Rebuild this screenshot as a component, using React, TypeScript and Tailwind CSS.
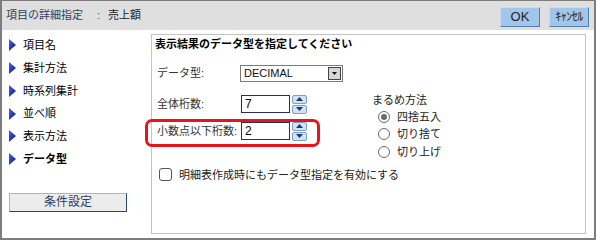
import React from "react";

const font = { fontFamily: '"Liberation Sans", "Noto Sans CJK JP", sans-serif' };

const navItems = ["項目名", "集計方法", "時系列集計", "並べ順", "表示方法", "データ型"];

function Arrow() {
  return (
    <svg width="7" height="12" viewBox="0 0 7 12" className="shrink-0">
      <defs>
        <linearGradient id="ag" x1="0" y1="0" x2="1" y2="1">
          <stop offset="0" stopColor="#4a63f0" />
          <stop offset="1" stopColor="#0b1470" />
        </linearGradient>
      </defs>
      <polygon points="0,0 7,6 0,12" fill="url(#ag)" />
    </svg>
  );
}

function Spin() {
  return (
    <div className="ml-[2px] flex w-[15px] flex-col gap-[1px]">
      <div className="flex h-[9px] items-center justify-center rounded-[2px] border border-[#7d9fc8] bg-[#d2e2f4]">
        <svg width="7" height="4" viewBox="0 0 7 4">
          <polygon points="0,4 3.5,0 7,4" fill="#173e6e" />
        </svg>
      </div>
      <div className="flex h-[9px] items-center justify-center rounded-[2px] border border-[#7d9fc8] bg-[#d2e2f4]">
        <svg width="7" height="4" viewBox="0 0 7 4">
          <polygon points="0,0 7,0 3.5,4" fill="#173e6e" />
        </svg>
      </div>
    </div>
  );
}

function NumberRow({ label, value }: { label: string; value: string }) {
  return (
    <div className="flex h-[18px] items-center">
      <span className="w-[84px] text-[11px] leading-[18px] text-[#333]">{label}</span>
      <div className="flex h-[18px] w-[49px] items-center border border-[#2b2b63] bg-white pl-[3px] text-[12px] text-black">
        {value}
      </div>
      <Spin />
    </div>
  );
}

function Radio({ label, checked }: { label: string; checked?: boolean }) {
  return (
    <div className="flex h-[17.5px] items-center pl-[6px]">
      <span className="flex h-[12px] w-[12px] items-center justify-center rounded-full border border-[#6b6b6b] bg-white">
        {checked && <span className="h-[6px] w-[6px] rounded-full bg-[#6a6a6a]" />}
      </span>
      <span className="ml-[7px] text-[11px] text-[#222]">{label}</span>
    </div>
  );
}

export default function App() {
  return (
    <div className="h-[240px] w-[596px] bg-white" style={font}>
      <div className="flex h-[240px] w-[596px] flex-col border-2 border-t border-[#7d7d7d] bg-white">
        <div className="flex h-[29px] items-center justify-between bg-[#dfdfdf] pl-[4px] pr-[5px]">
          <div className="flex items-center text-[11px]">
            <span className="text-[#2e3f66]">項目の詳細指定</span>
            <span className="ml-[14px] text-[#555]">:</span>
            <span className="ml-[8px] text-[#222]">売上額</span>
          </div>
          <div className="flex items-center gap-[9px] pt-[2px]">
            <button
              type="button"
              className="flex h-[20px] w-[40px] items-center justify-center border border-b-[#4f7eb0] border-l-[#c9ddf2] border-r-[#4f7eb0] border-t-[#c9ddf2] bg-[#a2c5ea] text-[13px] text-[#222]"
            >
              OK
            </button>
            <button
              type="button"
              className="flex h-[20px] w-[40px] items-center justify-center border border-b-[#4f7eb0] border-l-[#c9ddf2] border-r-[#4f7eb0] border-t-[#c9ddf2] bg-[#a2c5ea] text-[12px] tracking-[-0.5px] text-[#222]"
            >
              ｷｬﾝｾﾙ
            </button>
          </div>
        </div>

        <div className="flex flex-1">
          <div className="flex w-[149px] flex-col pt-[4px]">
            {navItems.map((item, i) => (
              <div key={item} className="flex h-[22.75px] items-center pl-[7px]">
                <Arrow />
                <span
                  className={`ml-[7px] text-[11px] text-black ${i === navItems.length - 1 ? "font-bold" : ""}`}
                >
                  {item}
                </span>
              </div>
            ))}
            <button
              type="button"
              className="ml-[7px] mt-[22px] flex h-[19px] w-[118px] items-center justify-center border border-b-[#1d4a78] border-l-[#b4b4b4] border-r-[#1d4a78] border-t-[#b4b4b4] bg-[#ececec] text-[12px] text-[#2e3f66]"
            >
              条件設定
            </button>
          </div>

          <div className="relative mb-[4px] mr-[8px] mt-[4px] flex flex-1 flex-col border border-[#c4c4c4] pl-[5px]">
            <div className="-ml-[2px] text-[11px] font-bold leading-[18px] text-black">
              表示結果のデータ型を指定してください
            </div>

            <div className="mt-[12px] flex h-[17px] items-center">
              <span className="w-[83px] text-[11px] text-[#333]">データ型:</span>
              <div className="flex h-[17px] w-[103px] items-center justify-between border border-[#7a7a7a] bg-white pl-[3px] pr-[1px]">
                <span className="text-[11px] text-[#111]">DECIMAL</span>
                <span className="flex h-[13px] w-[13px] items-center justify-center border border-[#444] bg-[#d6d6d6]">
                  <svg width="5" height="3" viewBox="0 0 5 3">
                    <polygon points="0,0 5,0 2.5,3" fill="#111" />
                  </svg>
                </span>
              </div>
            </div>

            <div className="mt-[13px] flex">
              <div className="flex w-[215px] flex-col gap-[9px]">
                <NumberRow label="全体桁数:" value="7" />
                <NumberRow label="小数点以下桁数:" value="2" />
              </div>
              <div className="-mt-[3px] flex flex-col">
                <div className="text-[11px] leading-[16px] text-[#222]">まるめ方法</div>
                <Radio label="四捨五入" checked />
                <Radio label="切り捨て" />
                <Radio label="切り上げ" />
              </div>
            </div>

            <div className="mt-[6px] flex items-center pl-[2px]">
              <span className="h-[13px] w-[13px] rounded-[3px] border border-[#555] bg-white" />
              <span className="ml-[7px] text-[11px] text-[#222]">明細表作成時にもデータ型指定を有効にする</span>
            </div>

            <div className="pointer-events-none absolute left-[-7px] top-[84px] h-[28px] w-[175px] rounded-[7px] border-[3px] border-[#e8141c]" />
          </div>
        </div>
      </div>
    </div>
  );
}
